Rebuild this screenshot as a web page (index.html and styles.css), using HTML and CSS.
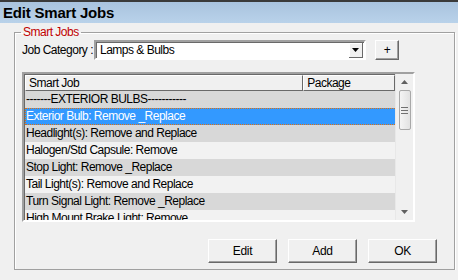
FILE: index.html
```html
<!DOCTYPE html>
<html lang="en">
<head>
    <meta charset="UTF-8">
    <title>Edit Smart Jobs</title>
    <link rel="stylesheet" href="styles.css">
</head>
<body>
    <div class="titlebar">Edit Smart Jobs</div>

    <fieldset class="group">
        <legend>Smart Jobs</legend>
        <div class="group-body">
            <div class="category-row">
                <label class="category-label">Job Category :</label>
                <div class="combo">
                    <span class="combo-text">Lamps &amp; Bulbs</span>
                    <span class="combo-btn">
                        <svg width="7" height="4" viewBox="0 0 7 4"><path d="M0 0H7L3.5 4Z" fill="#000"/></svg>
                    </span>
                </div>
                <button class="btn btn-plus">+</button>
            </div>

            <div class="listbox">
                <div class="list-main">
                    <div class="list-head">
                        <div class="head-cell head-job">Smart Job</div>
                        <div class="head-cell head-pkg">Package</div>
                    </div>
                    <div class="list-rows">
                        <div class="row row-gray">-------EXTERIOR BULBS-----------</div>
                        <div class="row row-selected">Exterior Bulb: Remove _Replace</div>
                        <div class="row row-gray">Headlight(s): Remove and Replace</div>
                        <div class="row">Halogen/Std Capsule: Remove</div>
                        <div class="row row-gray">Stop Light: Remove _Replace</div>
                        <div class="row">Tail Light(s): Remove and Replace</div>
                        <div class="row row-gray">Turn Signal Light: Remove _Replace</div>
                        <div class="row">High Mount Brake Light: Remove</div>
                    </div>
                </div>
                <div class="scrollbar">
                    <svg class="arrow" width="7" height="4" viewBox="0 0 7 4"><path d="M3.5 0L7 4H0Z" fill="#606060"/></svg>
                    <div class="thumb">
                        <span class="grip"></span>
                        <span class="grip"></span>
                        <span class="grip"></span>
                    </div>
                    <div class="track"></div>
                    <svg class="arrow" width="7" height="4" viewBox="0 0 7 4"><path d="M0 0H7L3.5 4Z" fill="#606060"/></svg>
                </div>
            </div>

            <div class="button-row">
                <button class="btn btn-action">Edit</button>
                <button class="btn btn-action">Add</button>
                <button class="btn btn-action">OK</button>
            </div>
        </div>
    </fieldset>
</body>
</html>
```

FILE: styles.css
```css
body {
    margin: 0;
    background-color: #f0f0f0;
    font-family: "Liberation Sans", Arial, sans-serif;
    font-size: 12px;
    letter-spacing: -0.5px;
    color: #000;
}
.titlebar {
    height: 21px;
    border-top: 2px solid #3a3a3a;
    background: linear-gradient(#a9c3de, #b9d2ea);
    font-size: 15px;
    font-weight: bold;
    letter-spacing: -0.2px;
    line-height: 21px;
    padding-left: 3px;
}
.group {
    margin: 2px 3px 0 14px;
    padding: 0;
    border: 1px solid #a0a0a0;
    box-shadow: inset 1px 1px 0 #fff, 1px 1px 0 #fff;
}
.group legend {
    color: #c00000;
    font-size: 12px;
    line-height: 14px;
    padding: 0 2px;
    margin-left: 6px;
}
.group-body {
    padding: 1px 17px 6px 7px;
}
.category-row {
    display: flex;
    align-items: center;
}
.category-label {
    width: 72px;
    white-space: nowrap;
}
.combo {
    width: 268px;
    height: 16px;
    display: flex;
    align-items: center;
    background-color: #fff;
    border: 2px solid;
    border-color: #a0a0a0 #fff #fff #a0a0a0;
    box-shadow: inset 1px 1px 0 #696969;
}
.combo-text {
    flex: 1;
    padding-left: 4px;
}
.combo-btn {
    width: 13px;
    height: 14px;
    margin-right: 1px;
    display: flex;
    align-items: center;
    justify-content: center;
    background-color: #f0f0f0;
    border-right: 1px solid #696969;
    border-bottom: 1px solid #696969;
    box-shadow: inset 1px 1px 0 #fff;
}
.btn {
    font-family: "Liberation Sans", Arial, sans-serif;
    font-size: 12px;
    letter-spacing: -0.3px;
    background-color: #f0f0f0;
    border: 1px solid;
    border-color: #fff #696969 #696969 #fff;
    box-shadow: inset -1px -1px 0 #a0a0a0;
    padding: 0;
    color: #000;
}
.btn-plus {
    width: 24px;
    height: 20px;
    margin-left: 9px;
}
.listbox {
    margin-top: 12px;
    width: 389px;
    height: 146px;
    display: flex;
    border: 2px solid;
    border-color: #a0a0a0 #fff #fff #a0a0a0;
    box-shadow: inset 1px 1px 0 #696969;
    overflow: hidden;
}
.list-main {
    flex: 1;
    padding: 1px 0 0 1px;
    overflow: hidden;
}
.list-head {
    display: flex;
    height: 16px;
}
.head-cell {
    box-sizing: border-box;
    background-color: #f0f0f0;
    border: 1px solid;
    border-color: #fff #696969 #696969 #fff;
    line-height: 14px;
    padding-left: 3px;
}
.head-job {
    width: 279px;
}
.head-pkg {
    width: 92px;
}
.row {
    height: 17px;
    line-height: 17px;
    padding-left: 1px;
    width: 371px;
    background-color: #f2f2f2;
    white-space: nowrap;
}
.row-gray {
    background-color: #d8d8d8;
}
.row-selected {
    background-color: #3399ff;
    color: #fff;
    outline: 1px dotted #e07010;
    outline-offset: -1px;
}
.scrollbar {
    width: 17px;
    display: flex;
    flex-direction: column;
    align-items: center;
    background-color: #f0f0f0;
    border-left: 1px solid #e8e8e8;
}
.scrollbar .arrow {
    margin: 6px 0;
}
.thumb {
    width: 12px;
    height: 40px;
    box-sizing: border-box;
    border: 1px solid #a8a8a8;
    border-radius: 2px;
    background: linear-gradient(90deg, #f4f4f4, #e2e2e2);
    display: flex;
    flex-direction: column;
    align-items: center;
    justify-content: center;
    gap: 2px;
}
.grip {
    width: 7px;
    height: 1px;
    background-color: #707070;
}
.track {
    flex: 1;
}
.button-row {
    display: flex;
    justify-content: flex-end;
    gap: 11px;
    margin-top: 17px;
}
.btn-action {
    width: 69px;
    height: 24px;
}
```
